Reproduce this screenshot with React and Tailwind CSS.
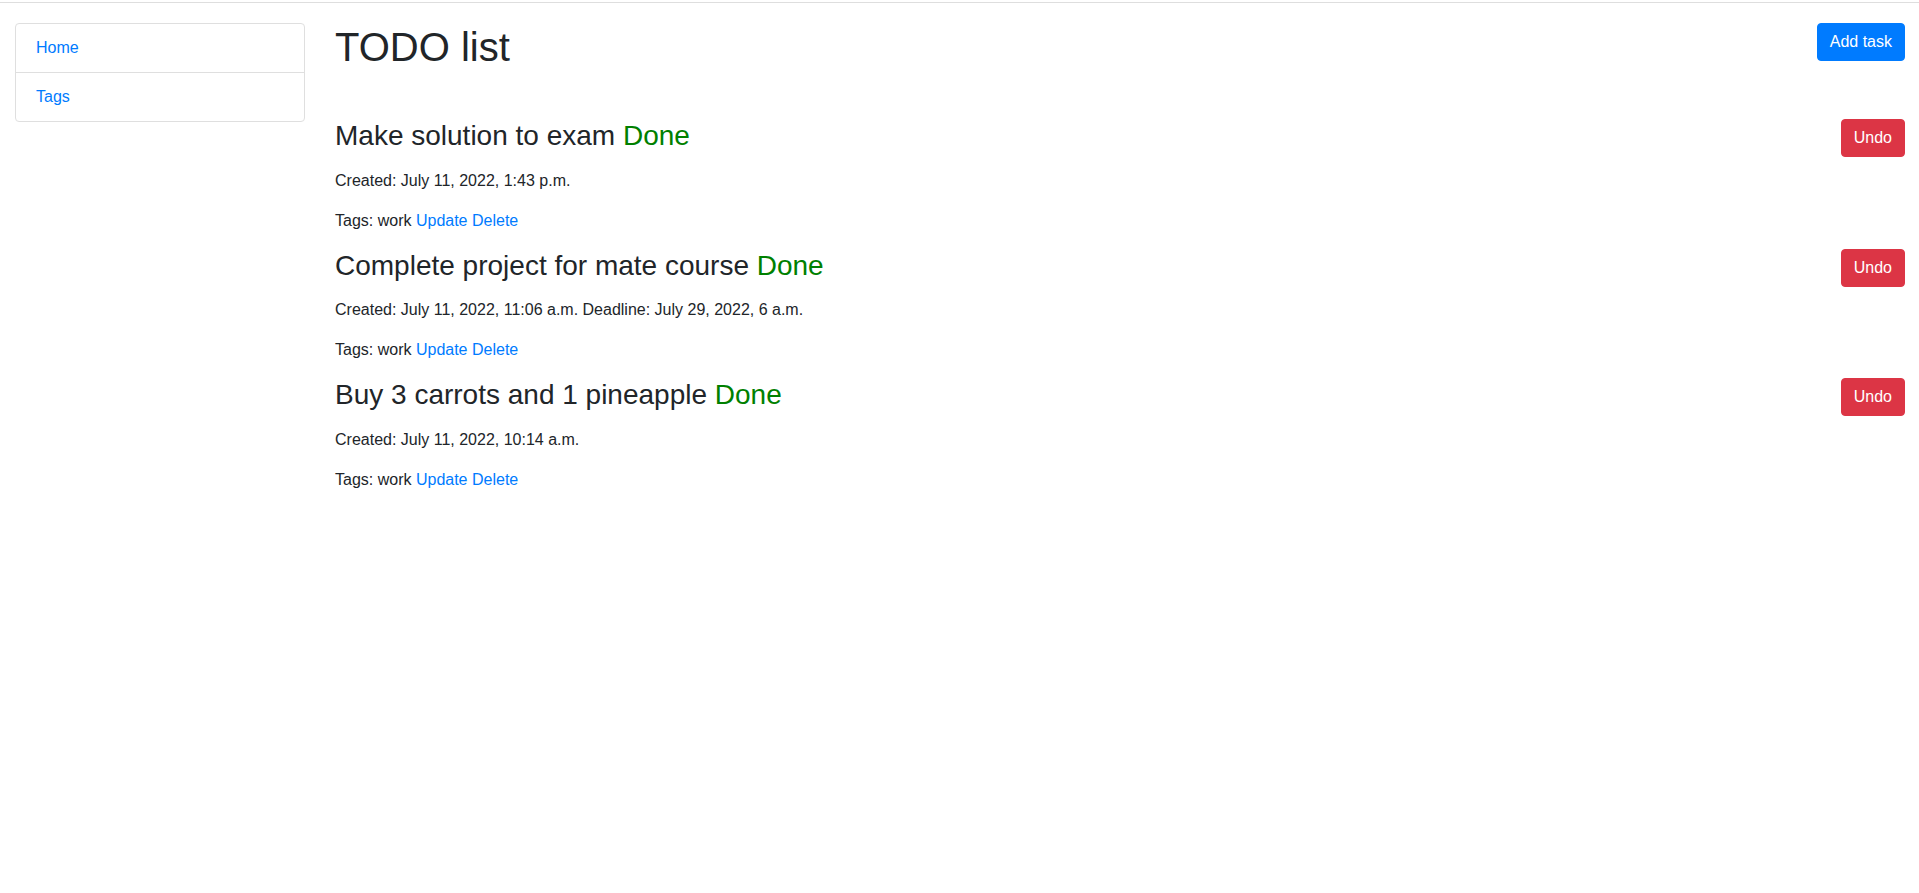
import React from "react";

const tasks = [
  {
    title: "Make solution to exam",
    meta: "Created: July 11, 2022, 1:43 p.m.",
  },
  {
    title: "Complete project for mate course",
    meta: "Created: July 11, 2022, 11:06 a.m. Deadline: July 29, 2022, 6 a.m.",
  },
  {
    title: "Buy 3 carrots and 1 pineapple",
    meta: "Created: July 11, 2022, 10:14 a.m.",
  },
];

export default function App() {
  return (
    <div
      className="min-h-screen bg-white text-[#212529] text-base leading-6"
      style={{ fontFamily: '"Liberation Sans", Arial, sans-serif' }}
    >
      <div className="h-[2px]" />
      <div className="border-t border-[#dedede]" />
      <div className="flex pt-[20px]">
        <div className="w-[320px] shrink-0 px-[15px]">
          <div className="border border-[#dfdfdf] rounded-[4px] flex flex-col">
            <a className="px-5 py-3 text-[#007bff] leading-6 cursor-pointer">Home</a>
            <a className="px-5 py-3 text-[#007bff] leading-6 border-t border-[#dfdfdf] cursor-pointer">
              Tags
            </a>
          </div>
        </div>
        <div className="flex-1 pl-[15px] pr-[14px]">
          <div className="flex justify-between items-start mb-[48px]">
            <h1 className="text-[40px] leading-[1.2] font-normal">TODO list</h1>
            <button className="px-3 py-[6px] text-base leading-6 rounded-[4px] text-white bg-[#007bff] border border-[#007bff]">
              Add task
            </button>
          </div>
          {tasks.map((t) => (
            <div key={t.title}>
              <div className="flex justify-between items-start">
                <h3 className="text-[28px] leading-[1.2] font-normal mb-4">
                  {t.title} <span className="text-[#008000]">Done</span>
                </h3>
                <button className="px-3 py-[6px] text-base leading-6 rounded-[4px] text-white bg-[#dc3545] border border-[#dc3545]">
                  Undo
                </button>
              </div>
              <p className="mb-4">{t.meta}</p>
              <p className="mb-4">
                Tags: work <a className="text-[#007bff] cursor-pointer">Update</a>{" "}
                <a className="text-[#007bff] cursor-pointer">Delete</a>
              </p>
            </div>
          ))}
        </div>
      </div>
    </div>
  );
}
